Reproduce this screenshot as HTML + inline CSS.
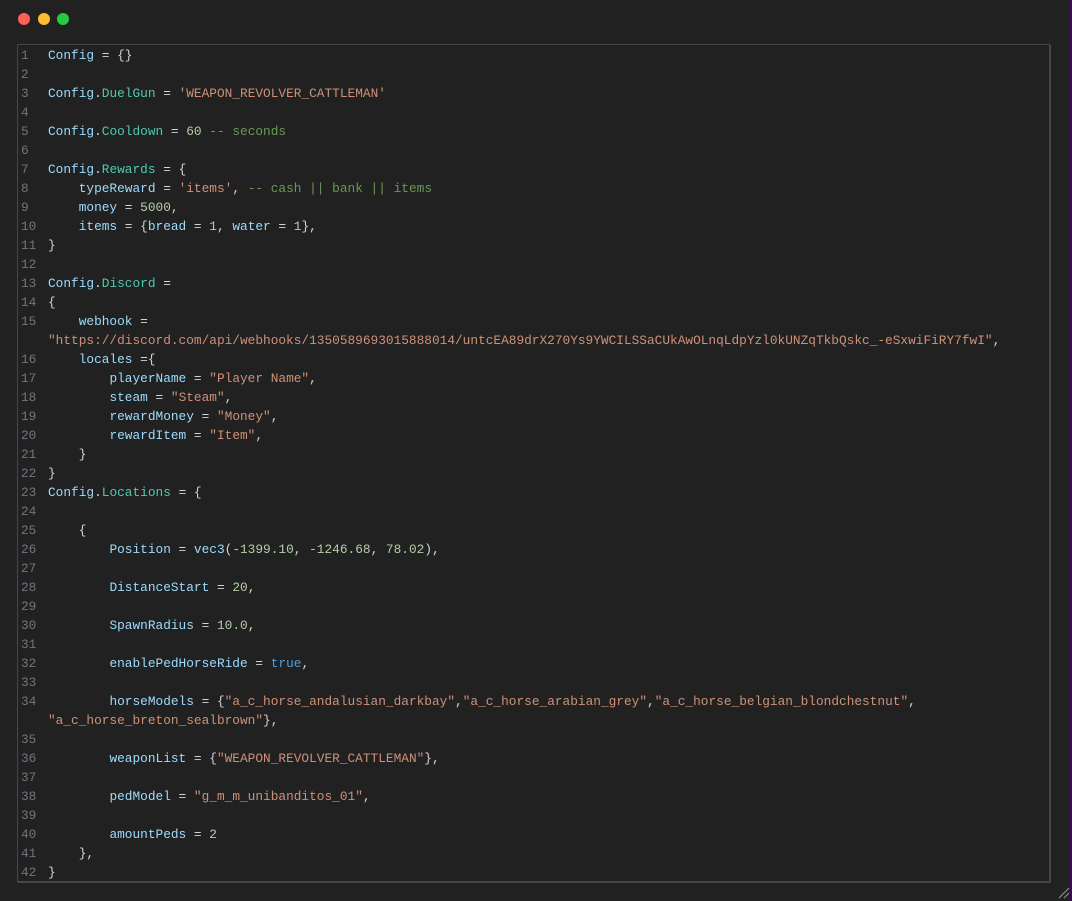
<!DOCTYPE html>
<html><head><meta charset="utf-8"><style>
html,body{margin:0;padding:0;background:#212121;width:1072px;height:901px;overflow:hidden}
body{position:relative;border-right:2px solid #3a0a5a;box-sizing:border-box}
.dot{position:absolute;top:13px;width:12px;height:12px;border-radius:50%}
.box{position:absolute;left:17px;top:44px;width:1031px;height:836px;border:1px solid #474747;border-right:2px solid #474747;border-bottom:2px solid #474747;border-radius:2px;background:#212121}
.code{position:absolute;left:0;top:1px;width:1030px;font-family:"Liberation Mono",monospace;font-size:12.8px;color:#d4d4d4;white-space:normal}
.l{height:19px;line-height:19px;position:relative}
.n{position:absolute;left:3px;color:#6e7681;width:24px;white-space:pre}
.t{position:absolute;left:30px;white-space:pre}
.v{color:#9cdcfe}.p{color:#4ec9b0}.s{color:#ce9178}.m{color:#b5cea8}.c{color:#6a9955}.k{color:#569cd6}
</style></head><body>
<div class="dot" style="left:18px;background:#ff5f57"></div>
<div class="dot" style="left:38px;background:#febc2e"></div>
<div class="dot" style="left:57px;background:#28c840"></div>
<div class="box"><div class="code">
<div class="l"><span class="n">1</span><span class="t"><span class="v">Config</span> = {}</span></div>
<div class="l"><span class="n">2</span></div>
<div class="l"><span class="n">3</span><span class="t"><span class="v">Config</span>.<span class="p">DuelGun</span> = <span class="s">'WEAPON_REVOLVER_CATTLEMAN'</span></span></div>
<div class="l"><span class="n">4</span></div>
<div class="l"><span class="n">5</span><span class="t"><span class="v">Config</span>.<span class="p">Cooldown</span> = <span class="m">60</span> <span class="c">-- seconds</span></span></div>
<div class="l"><span class="n">6</span></div>
<div class="l"><span class="n">7</span><span class="t"><span class="v">Config</span>.<span class="p">Rewards</span> = {</span></div>
<div class="l"><span class="n">8</span><span class="t">    <span class="v">typeReward</span> = <span class="s">'items'</span>, <span class="c">-- cash || bank || items</span></span></div>
<div class="l"><span class="n">9</span><span class="t">    <span class="v">money</span> = <span class="m">5000</span>,</span></div>
<div class="l"><span class="n">10</span><span class="t">    <span class="v">items</span> = {<span class="v">bread</span> = <span class="m">1</span>, <span class="v">water</span> = <span class="m">1</span>},</span></div>
<div class="l"><span class="n">11</span><span class="t">}</span></div>
<div class="l"><span class="n">12</span></div>
<div class="l"><span class="n">13</span><span class="t"><span class="v">Config</span>.<span class="p">Discord</span> =</span></div>
<div class="l"><span class="n">14</span><span class="t">{</span></div>
<div class="l"><span class="n">15</span><span class="t">    <span class="v">webhook</span> =</span></div>
<div class="l"><span class="t"><span class="s">"https://discord.com/api/webhooks/1350589693015888014/untcEA89drX270Ys9YWCILSSaCUkAwOLnqLdpYzl0kUNZqTkbQskc_-eSxwiFiRY7fwI"</span>,</span></div>
<div class="l"><span class="n">16</span><span class="t">    <span class="v">locales</span> ={</span></div>
<div class="l"><span class="n">17</span><span class="t">        <span class="v">playerName</span> = <span class="s">"Player Name"</span>,</span></div>
<div class="l"><span class="n">18</span><span class="t">        <span class="v">steam</span> = <span class="s">"Steam"</span>,</span></div>
<div class="l"><span class="n">19</span><span class="t">        <span class="v">rewardMoney</span> = <span class="s">"Money"</span>,</span></div>
<div class="l"><span class="n">20</span><span class="t">        <span class="v">rewardItem</span> = <span class="s">"Item"</span>,</span></div>
<div class="l"><span class="n">21</span><span class="t">    }</span></div>
<div class="l"><span class="n">22</span><span class="t">}</span></div>
<div class="l"><span class="n">23</span><span class="t"><span class="v">Config</span>.<span class="p">Locations</span> = {</span></div>
<div class="l"><span class="n">24</span></div>
<div class="l"><span class="n">25</span><span class="t">    {</span></div>
<div class="l"><span class="n">26</span><span class="t">        <span class="v">Position</span> = <span class="v">vec3</span>(<span class="m">-1399.10</span>, <span class="m">-1246.68</span>, <span class="m">78.02</span>),</span></div>
<div class="l"><span class="n">27</span></div>
<div class="l"><span class="n">28</span><span class="t">        <span class="v">DistanceStart</span> = <span class="m">20</span>,</span></div>
<div class="l"><span class="n">29</span></div>
<div class="l"><span class="n">30</span><span class="t">        <span class="v">SpawnRadius</span> = <span class="m">10.0</span>,</span></div>
<div class="l"><span class="n">31</span></div>
<div class="l"><span class="n">32</span><span class="t">        <span class="v">enablePedHorseRide</span> = <span class="k">true</span>,</span></div>
<div class="l"><span class="n">33</span></div>
<div class="l"><span class="n">34</span><span class="t">        <span class="v">horseModels</span> = {<span class="s">"a_c_horse_andalusian_darkbay"</span>,<span class="s">"a_c_horse_arabian_grey"</span>,<span class="s">"a_c_horse_belgian_blondchestnut"</span>,</span></div>
<div class="l"><span class="t"><span class="s">"a_c_horse_breton_sealbrown"</span>},</span></div>
<div class="l"><span class="n">35</span></div>
<div class="l"><span class="n">36</span><span class="t">        <span class="v">weaponList</span> = {<span class="s">"WEAPON_REVOLVER_CATTLEMAN"</span>},</span></div>
<div class="l"><span class="n">37</span></div>
<div class="l"><span class="n">38</span><span class="t">        <span class="v">pedModel</span> = <span class="s">"g_m_m_unibanditos_01"</span>,</span></div>
<div class="l"><span class="n">39</span></div>
<div class="l"><span class="n">40</span><span class="t">        <span class="v">amountPeds</span> = <span class="m">2</span></span></div>
<div class="l"><span class="n">41</span><span class="t">    },</span></div>
<div class="l"><span class="n">42</span><span class="t">}</span></div>
</div></div>
<svg style="position:absolute;left:1058px;top:887px" width="12" height="12"><path d="M1 11L11 1M6 11L11 6" stroke="#999" stroke-width="1"/></svg>
</body></html>
